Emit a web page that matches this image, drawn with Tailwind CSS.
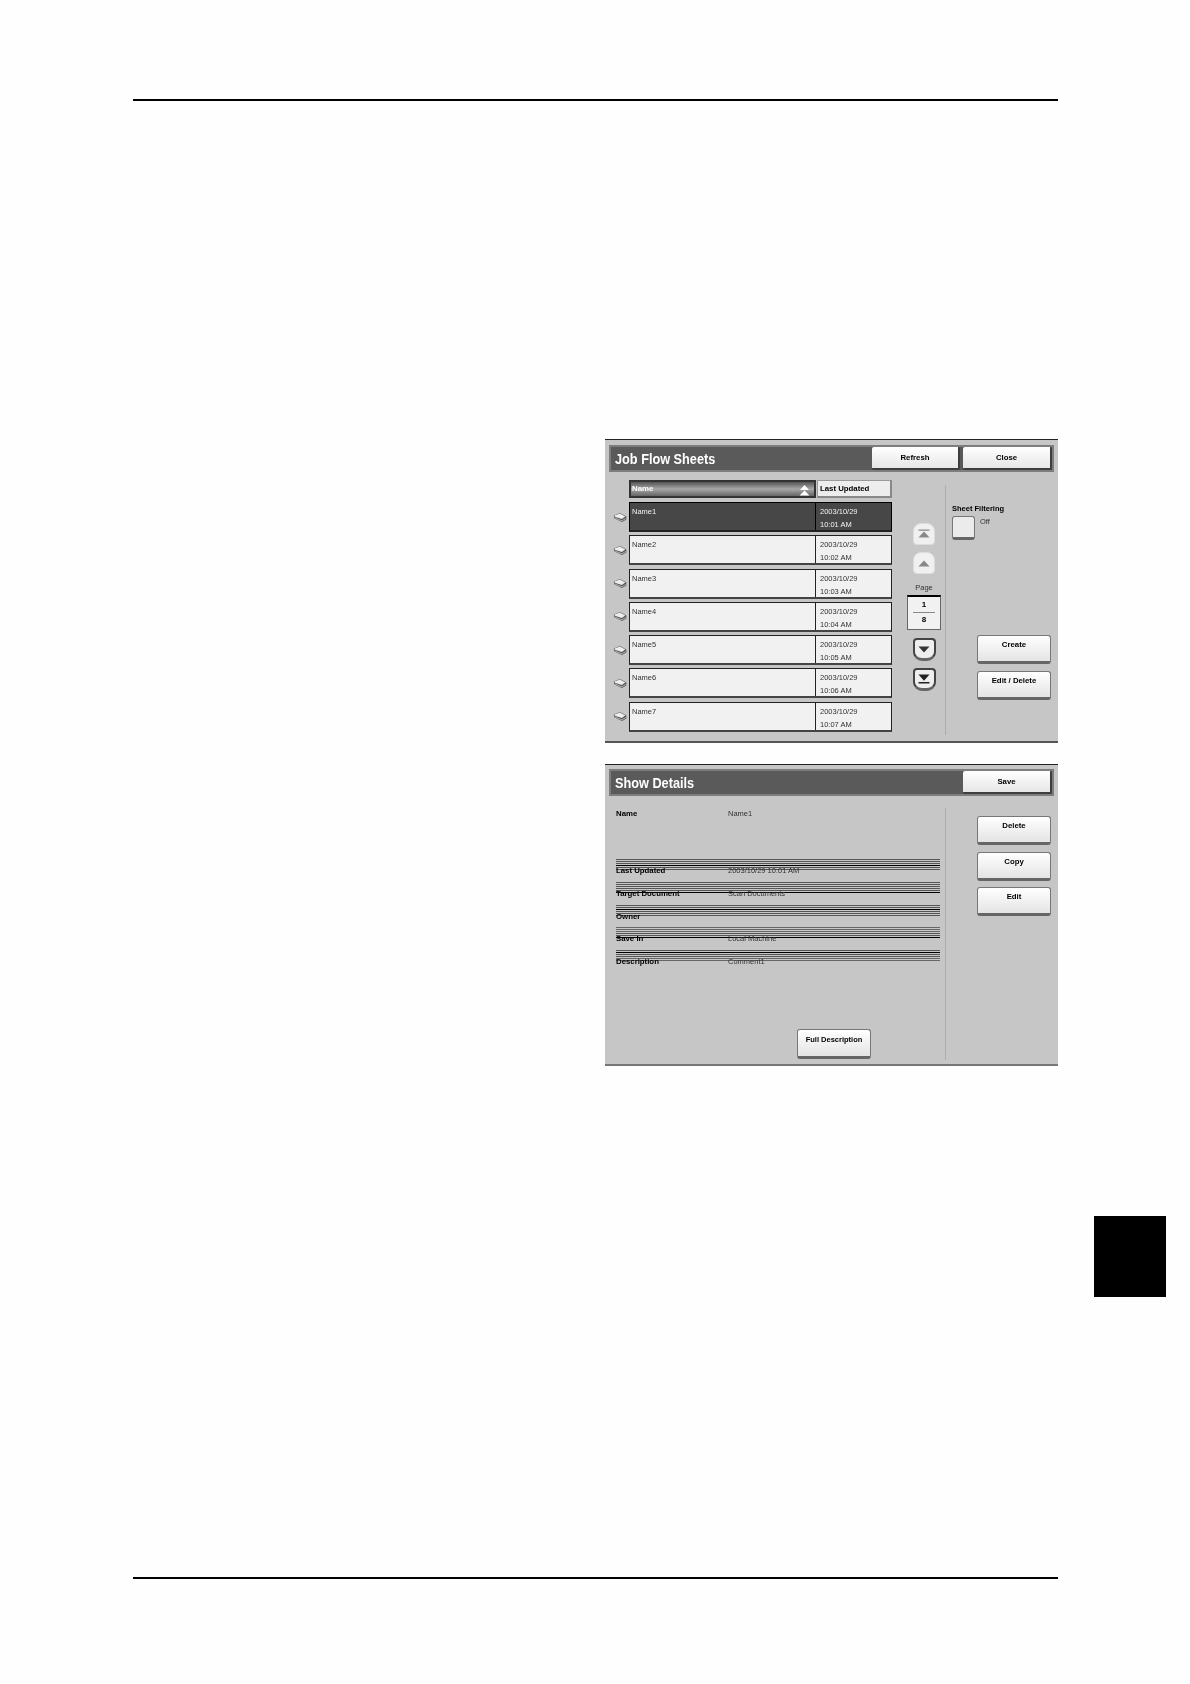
<!DOCTYPE html>
<html lang="en">
<head>
    <meta charset="UTF-8">
    <title>Job Flow Sheets</title>
    <script src="https://cdn.jsdelivr.net/npm/@tailwindcss/browser@4"></script>
</head>
<body class="bg-[#fefefe] font-['Liberation_Sans',Arial,sans-serif] text-black">
<div class="relative w-[1190px] h-[1684px] overflow-hidden pt-[99px]">

    <!-- top rule -->
    <div class="ml-[133px] w-[925px] h-[2px] bg-black"></div>

    <!-- Job Flow Sheets panel -->
    <section class="ml-[605px] mt-[338px] w-[453px] h-[304px] bg-[#c6c6c6] border-t border-t-[#222] border-b-2 border-b-[#555] blur-[0.35px]">
        <header class="mx-[4px] mt-[5px] h-[27px] bg-[#5a5a5a] border-2 border-[#7d7d7d] flex items-center pl-[4px]">
            <h1 class="flex-1 origin-left scale-x-[0.82] font-bold text-[15.5px] leading-none text-white">Job Flow Sheets</h1>
            <div class="w-[88px] h-[23px] mr-[3px] rounded-[2px] bg-linear-to-b from-white to-[#e6e6e6] border-r-2 border-b-2 border-[#3d3d3d] text-center text-[7.8px] font-bold leading-[22px]">Refresh</div>
            <div class="w-[89px] h-[23px] rounded-[2px] bg-linear-to-b from-white to-[#e6e6e6] border-r-2 border-b-2 border-[#3d3d3d] text-center text-[7.8px] font-bold leading-[22px]">Close</div>
        </header>

        <div class="flex pl-[8px] pt-[8px]">
            <!-- list -->
            <div class="w-[279px]">
                <div class="ml-[16px] flex h-[18px]">
                    <div class="relative w-[187px] border-2 border-[#333] bg-linear-to-b from-[#555] via-[#a8a8a8] to-[#666] text-white text-[7.8px] font-bold leading-[13px] pl-[1px]">
                        Name
                        <svg class="absolute right-[4px] top-[3px]" width="11" height="11" viewBox="0 0 11 11"><path d="M5.500 0L10 5H1z M5.500 5.500L10.500 10.500H0.500z" fill="#fff"/></svg>
                    </div>
                    <div class="ml-px flex-1 border border-[#999] border-b-2 border-r-2 border-b-[#888] border-r-[#888] bg-[#ededed] text-[7.8px] font-bold leading-[15px] pl-[2px]">Last Updated</div>
                </div>

                <div class="mt-[4px] flex flex-col gap-[3.3px] text-[7.5px]">
                    <div class="flex items-center h-[30px]">
                        <svg class="w-[14px] mr-[2px]" width="14" height="11" viewBox="0 0 14 11"><path d="M0.800 3.500L7 1L13.300 4.500L13.300 7.500L9 10L1.500 6.500z" fill="#555"/><path d="M1.500 3.500L7 1.600L12.300 4.500L8.800 7L1.800 4.800z" fill="#ededed"/><path d="M2 6L8.800 8.800L12.800 6.500" fill="none" stroke="#ddd" stroke-width="0.700"/></svg>
                        <div class="flex-1 flex h-full border border-black border-b-2 border-b-[#222] bg-[#474747] text-[#f2f2f2]">
                            <div class="w-[186px] border-r border-black pl-[2px] pt-[4px] leading-[10px]">Name1</div>
                            <div class="flex-1 pl-[4px] pt-[2px] leading-[13px]">2003/10/29<br>10:01 AM</div>
                        </div>
                    </div>
                    <div class="flex items-center h-[30px]">
                        <svg class="w-[14px] mr-[2px]" width="14" height="11" viewBox="0 0 14 11"><path d="M0.800 3.500L7 1L13.300 4.500L13.300 7.500L9 10L1.500 6.500z" fill="#555"/><path d="M1.500 3.500L7 1.600L12.300 4.500L8.800 7L1.800 4.800z" fill="#ededed"/><path d="M2 6L8.800 8.800L12.800 6.500" fill="none" stroke="#ddd" stroke-width="0.700"/></svg>
                        <div class="flex-1 flex h-full border border-[#222] border-b-2 border-b-[#444] bg-[#f1f1f1] text-[#333]">
                            <div class="w-[186px] border-r border-[#222] pl-[2px] pt-[4px] leading-[10px]">Name2</div>
                            <div class="flex-1 pl-[4px] pt-[2px] leading-[13px]">2003/10/29<br>10:02 AM</div>
                        </div>
                    </div>
                    <div class="flex items-center h-[30px]">
                        <svg class="w-[14px] mr-[2px]" width="14" height="11" viewBox="0 0 14 11"><path d="M0.800 3.500L7 1L13.300 4.500L13.300 7.500L9 10L1.500 6.500z" fill="#555"/><path d="M1.500 3.500L7 1.600L12.300 4.500L8.800 7L1.800 4.800z" fill="#ededed"/><path d="M2 6L8.800 8.800L12.800 6.500" fill="none" stroke="#ddd" stroke-width="0.700"/></svg>
                        <div class="flex-1 flex h-full border border-[#222] border-b-2 border-b-[#444] bg-[#f1f1f1] text-[#333]">
                            <div class="w-[186px] border-r border-[#222] pl-[2px] pt-[4px] leading-[10px]">Name3</div>
                            <div class="flex-1 pl-[4px] pt-[2px] leading-[13px]">2003/10/29<br>10:03 AM</div>
                        </div>
                    </div>
                    <div class="flex items-center h-[30px]">
                        <svg class="w-[14px] mr-[2px]" width="14" height="11" viewBox="0 0 14 11"><path d="M0.800 3.500L7 1L13.300 4.500L13.300 7.500L9 10L1.500 6.500z" fill="#555"/><path d="M1.500 3.500L7 1.600L12.300 4.500L8.800 7L1.800 4.800z" fill="#ededed"/><path d="M2 6L8.800 8.800L12.800 6.500" fill="none" stroke="#ddd" stroke-width="0.700"/></svg>
                        <div class="flex-1 flex h-full border border-[#222] border-b-2 border-b-[#444] bg-[#f1f1f1] text-[#333]">
                            <div class="w-[186px] border-r border-[#222] pl-[2px] pt-[4px] leading-[10px]">Name4</div>
                            <div class="flex-1 pl-[4px] pt-[2px] leading-[13px]">2003/10/29<br>10:04 AM</div>
                        </div>
                    </div>
                    <div class="flex items-center h-[30px]">
                        <svg class="w-[14px] mr-[2px]" width="14" height="11" viewBox="0 0 14 11"><path d="M0.800 3.500L7 1L13.300 4.500L13.300 7.500L9 10L1.500 6.500z" fill="#555"/><path d="M1.500 3.500L7 1.600L12.300 4.500L8.800 7L1.800 4.800z" fill="#ededed"/><path d="M2 6L8.800 8.800L12.800 6.500" fill="none" stroke="#ddd" stroke-width="0.700"/></svg>
                        <div class="flex-1 flex h-full border border-[#222] border-b-2 border-b-[#444] bg-[#f1f1f1] text-[#333]">
                            <div class="w-[186px] border-r border-[#222] pl-[2px] pt-[4px] leading-[10px]">Name5</div>
                            <div class="flex-1 pl-[4px] pt-[2px] leading-[13px]">2003/10/29<br>10:05 AM</div>
                        </div>
                    </div>
                    <div class="flex items-center h-[30px]">
                        <svg class="w-[14px] mr-[2px]" width="14" height="11" viewBox="0 0 14 11"><path d="M0.800 3.500L7 1L13.300 4.500L13.300 7.500L9 10L1.500 6.500z" fill="#555"/><path d="M1.500 3.500L7 1.600L12.300 4.500L8.800 7L1.800 4.800z" fill="#ededed"/><path d="M2 6L8.800 8.800L12.800 6.500" fill="none" stroke="#ddd" stroke-width="0.700"/></svg>
                        <div class="flex-1 flex h-full border border-[#222] border-b-2 border-b-[#444] bg-[#f1f1f1] text-[#333]">
                            <div class="w-[186px] border-r border-[#222] pl-[2px] pt-[4px] leading-[10px]">Name6</div>
                            <div class="flex-1 pl-[4px] pt-[2px] leading-[13px]">2003/10/29<br>10:06 AM</div>
                        </div>
                    </div>
                    <div class="flex items-center h-[30px]">
                        <svg class="w-[14px] mr-[2px]" width="14" height="11" viewBox="0 0 14 11"><path d="M0.800 3.500L7 1L13.300 4.500L13.300 7.500L9 10L1.500 6.500z" fill="#555"/><path d="M1.500 3.500L7 1.600L12.300 4.500L8.800 7L1.800 4.800z" fill="#ededed"/><path d="M2 6L8.800 8.800L12.800 6.500" fill="none" stroke="#ddd" stroke-width="0.700"/></svg>
                        <div class="flex-1 flex h-full border border-[#222] border-b-2 border-b-[#444] bg-[#f1f1f1] text-[#333]">
                            <div class="w-[186px] border-r border-[#222] pl-[2px] pt-[4px] leading-[10px]">Name7</div>
                            <div class="flex-1 pl-[4px] pt-[2px] leading-[13px]">2003/10/29<br>10:07 AM</div>
                        </div>
                    </div>
                </div>
            </div>

            <!-- page navigation -->
            <div class="ml-[15px] w-[34px] pt-[43px] flex flex-col items-center">
                <div class="w-[22px] h-[22px] rounded-t-[8px] rounded-b-[4px] bg-[#f0f0f0] border border-[#ddd] flex items-center justify-center">
                    <svg width="12" height="10" viewBox="0 0 12 10"><path d="M0.500 0.500H11.500V1.800H0.500z M6 2.500L11.500 8.500H0.500z" fill="#888"/></svg>
                </div>
                <div class="mt-[7px] w-[22px] h-[22px] rounded-t-[8px] rounded-b-[4px] bg-[#f0f0f0] border border-[#ddd] flex items-center justify-center">
                    <svg width="12" height="7" viewBox="0 0 12 7"><path d="M6 0.500L11.500 6.500H0.500z" fill="#888"/></svg>
                </div>
                <div class="mt-[9px] text-[7.5px] leading-[10px] text-[#333]">Page</div>
                <div class="mt-[2px] w-[34px] h-[35px] border border-[#666] border-t-2 border-t-black bg-[#f1f1f1] flex flex-col items-center text-[8px] font-bold leading-[14px]">
                    <span class="mt-[1px]">1</span>
                    <span class="w-[22px] h-px bg-[#888]"></span>
                    <span>8</span>
                </div>
                <div class="mt-[8px] w-[23px] h-[23px] rounded-t-[4px] rounded-b-[9px] bg-[#efefef] border-2 border-[#444] border-b-[3px] border-b-[#666] flex items-center justify-center">
                    <svg width="12" height="7" viewBox="0 0 12 7"><path d="M0.500 0.500H11.500L6 6.500z" fill="#333"/></svg>
                </div>
                <div class="mt-[7px] w-[23px] h-[23px] rounded-t-[4px] rounded-b-[9px] bg-[#efefef] border-2 border-[#444] border-b-[3px] border-b-[#666] flex items-center justify-center">
                    <svg width="12" height="10" viewBox="0 0 12 10"><path d="M0.500 0.500H11.500L6 6.800z M0.500 8H11.500V9.500H0.500z" fill="#222"/></svg>
                </div>
            </div>

            <!-- divider -->
            <div class="ml-[4px] mt-[5px] w-px h-[250px] bg-[#aeaeae]"></div>

            <!-- side actions -->
            <div class="ml-[6px] w-[99px] flex flex-col">
                <div class="mt-[24px] text-[7.5px] font-bold leading-[10px]">Sheet Filtering</div>
                <div class="mt-[2px] flex items-start">
                    <div class="w-[23px] h-[24px] rounded-[3px] border border-[#777] border-b-[3px] border-b-[#666] bg-[#ebebeb]"></div>
                    <span class="ml-[5px] mt-[1px] text-[7.5px] leading-[10px] text-[#333]">Off</span>
                </div>
                <div class="ml-[25px] mt-[95px] w-[74px] h-[29px] rounded-[3px] border border-[#777] border-b-[3px] border-b-[#666] bg-linear-to-b from-white to-[#e4e4e4] text-center text-[7.8px] font-bold leading-[10px] pt-[4px]">Create</div>
                <div class="ml-[25px] mt-[7px] w-[74px] h-[29px] rounded-[3px] border border-[#777] border-b-[3px] border-b-[#666] bg-linear-to-b from-white to-[#e4e4e4] text-center text-[7.8px] font-bold leading-[10px] pt-[4px]">Edit / Delete</div>
            </div>
        </div>
    </section>

    <!-- Show Details panel -->
    <section class="ml-[605px] mt-[21px] w-[453px] h-[302px] bg-[#c6c6c6] border-t border-t-[#222] border-b-2 border-b-[#777] blur-[0.35px]">
        <header class="mx-[4px] mt-[4px] h-[27px] bg-[#5a5a5a] border-2 border-[#7d7d7d] flex items-center pl-[4px]">
            <h1 class="flex-1 origin-left scale-x-[0.82] font-bold text-[15.5px] leading-none text-white">Show Details</h1>
            <div class="w-[89px] h-[23px] rounded-[2px] bg-linear-to-b from-white to-[#e6e6e6] border-r-2 border-b-2 border-[#3d3d3d] text-center text-[7.8px] font-bold leading-[22px]">Save</div>
        </header>

        <div class="flex pl-[11px]">
            <!-- details -->
            <div class="relative w-[324px] h-[268px] pt-[13px] text-[7.5px] leading-[10px] text-[#333]">
                <div class="flex h-[50px]">
                    <span class="w-[112px] text-[7.8px] font-bold text-black">Name</span>
                    <span>Name1</span>
                </div>

                <div class="h-[22.8px]">
                    <div class="flex flex-col gap-px">
                        <div class="h-px bg-[#555]"></div><div class="h-px bg-[#555]"></div><div class="h-px bg-[#555]"></div><div class="h-px bg-black"></div><div class="h-px bg-[#555]"></div><div class="h-px bg-[#555]"></div>
                    </div>
                    <div class="flex -mt-[4px]">
                        <span class="w-[112px] text-[7.8px] font-bold text-black">Last Updated</span>
                        <span>2003/10/29 10:01 AM</span>
                    </div>
                </div>
                <div class="h-[22.8px]">
                    <div class="flex flex-col gap-px">
                        <div class="h-px bg-[#555]"></div><div class="h-px bg-[#555]"></div><div class="h-px bg-[#555]"></div><div class="h-px bg-[#555]"></div><div class="h-px bg-[#555]"></div><div class="h-px bg-black"></div>
                    </div>
                    <div class="flex -mt-[4px]">
                        <span class="w-[112px] text-[7.8px] font-bold text-black">Target Document</span>
                        <span>Scan Documents</span>
                    </div>
                </div>
                <div class="h-[22.8px]">
                    <div class="flex flex-col gap-px">
                        <div class="h-px bg-[#555]"></div><div class="h-px bg-[#555]"></div><div class="h-px bg-black"></div><div class="h-px bg-[#555]"></div><div class="h-px bg-[#555]"></div><div class="h-px bg-[#555]"></div>
                    </div>
                    <div class="flex -mt-[4px]">
                        <span class="w-[112px] text-[7.8px] font-bold text-black">Owner</span>
                    </div>
                </div>
                <div class="h-[22.8px]">
                    <div class="flex flex-col gap-px">
                        <div class="h-px bg-[#666]"></div><div class="h-px bg-[#666]"></div><div class="h-px bg-[#666]"></div><div class="h-px bg-[#555]"></div><div class="h-px bg-[#555]"></div><div class="h-px bg-black"></div>
                    </div>
                    <div class="flex -mt-[4px]">
                        <span class="w-[112px] text-[7.8px] font-bold text-black">Save In</span>
                        <span>Local Machine</span>
                    </div>
                </div>
                <div class="h-[22.8px]">
                    <div class="flex flex-col gap-px">
                        <div class="h-px bg-[#555]"></div><div class="h-px bg-black"></div><div class="h-px bg-[#555]"></div><div class="h-px bg-[#555]"></div><div class="h-px bg-[#666]"></div><div class="h-px bg-[#666]"></div>
                    </div>
                    <div class="flex -mt-[4px]">
                        <span class="w-[112px] text-[7.8px] font-bold text-black">Description</span>
                        <span>Comment1</span>
                    </div>
                </div>

                <div class="ml-[181px] mt-[56px] w-[74px] h-[30px] rounded-[3px] border border-[#777] border-b-[3px] border-b-[#666] bg-linear-to-b from-white to-[#e4e4e4] text-center text-[7.5px] font-bold leading-[10px] text-black pt-[5px]">Full Description</div>
            </div>

            <!-- divider -->
            <div class="ml-[5px] mt-[12px] w-px h-[252px] bg-[#aeaeae]"></div>

            <!-- side actions -->
            <div class="ml-[31px] pt-[20px] flex flex-col gap-[6.500px]">
                <div class="w-[74px] h-[29px] rounded-[3px] border border-[#777] border-b-[3px] border-b-[#666] bg-linear-to-b from-white to-[#e4e4e4] text-center text-[7.8px] font-bold leading-[10px] pt-[4px]">Delete</div>
                <div class="w-[74px] h-[29px] rounded-[3px] border border-[#777] border-b-[3px] border-b-[#666] bg-linear-to-b from-white to-[#e4e4e4] text-center text-[7.8px] font-bold leading-[10px] pt-[4px]">Copy</div>
                <div class="w-[74px] h-[29px] rounded-[3px] border border-[#777] border-b-[3px] border-b-[#666] bg-linear-to-b from-white to-[#e4e4e4] text-center text-[7.8px] font-bold leading-[10px] pt-[4px]">Edit</div>
            </div>
        </div>
    </section>

    <!-- bottom rule -->
    <div class="ml-[133px] mt-[511px] w-[925px] h-[2px] bg-black"></div>

    <!-- chapter tab on the page edge -->
    <div class="absolute left-[1094px] top-[1216px] w-[72px] h-[81px] bg-black"></div>
</div>
</body>
</html>
